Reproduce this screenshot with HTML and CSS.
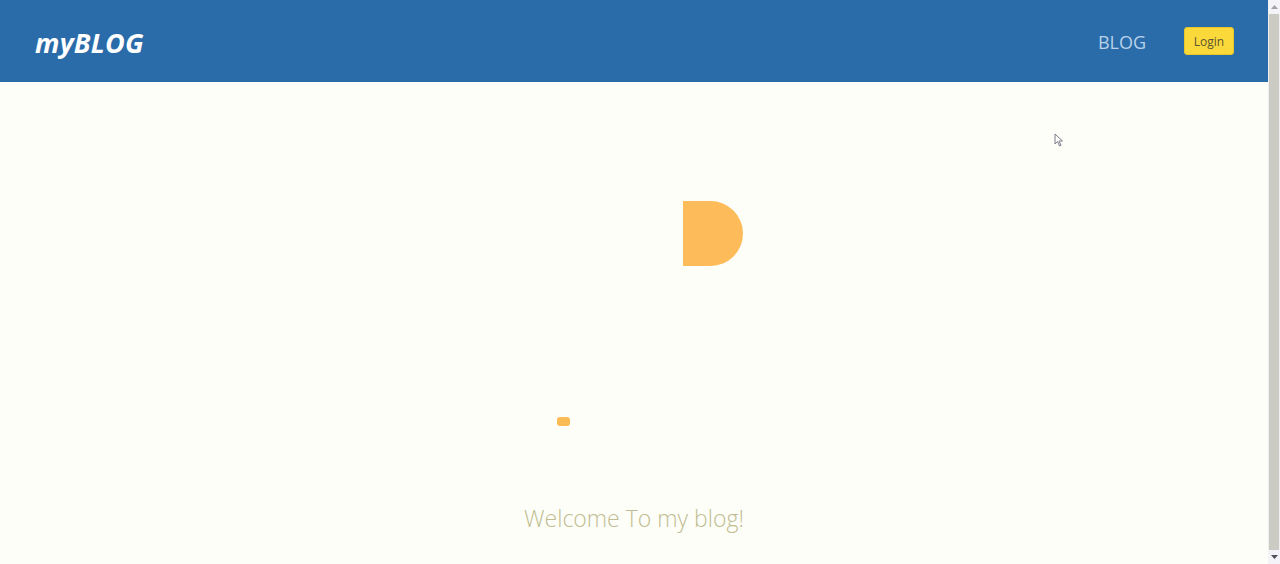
FILE: index.html
```html
<!DOCTYPE html>
<html lang="en">
<head>
<meta charset="utf-8">
<title>myBLOG</title>
<link rel="stylesheet" href="styles.css">
</head>
<body>
<div class="window">
  <div class="page">
    <header class="topbar">
      <a class="logo" href="#">myBLOG</a>
      <nav class="nav">
        <a class="nav-link" href="#">BLOG</a>
        <button class="login">Login</button>
      </nav>
    </header>
    <main class="hero">
      <div class="stage">
        <div class="shape-d"></div>
        <div class="shape-dot"></div>
        <svg class="cursor" width="10" height="14" viewBox="0 0 10 14"><path d="M1 1 L1 11 L3.5 8.5 L5.5 13 L7 12.3 L5 8 L8.5 8 Z" fill="#fff" stroke="#7a7a8a" stroke-width="1"/></svg>
      </div>
      <p class="welcome">Welcome To my blog!</p>
    </main>
  </div>
  <div class="scrollbar">
    <div class="sb-btn"><svg width="7" height="4" viewBox="0 0 7 4"><path d="M0 4 L3.5 0 L7 4 Z" fill="#a0a0a8"/></svg></div>
    <div class="sb-thumb"></div>
    <div class="sb-btn"><svg width="7" height="4" viewBox="0 0 7 4"><path d="M0 0 L3.5 4 L7 0 Z" fill="#505058"/></svg></div>
  </div>
</div>
</body>
</html>
```
FILE: styles.css
```css
* { box-sizing: border-box; }
html, body { margin: 0; padding: 0; height: 100%; overflow: hidden; }
body { background: #fefef8; font-family: "Open Sans", "Noto Sans", sans-serif; }
.window { display: flex; height: 564px; }
.page { flex: 1; display: flex; flex-direction: column; }
.topbar {
  height: 82px;
  background: #2a6ca9;
  display: flex;
  align-items: center;
  justify-content: space-between;
  padding: 0 34px 0 35px;
}
.logo {
  color: #fff;
  font-weight: 700;
  font-style: italic;
  font-size: 27px;
  text-decoration: none;
  letter-spacing: 0.2px;
  margin-top: 2px;
}
.nav { display: flex; align-items: center; gap: 38px; }
.nav-link {
  color: #b9d1ea;
  font-size: 18px;
  text-decoration: none;
  margin-top: 2px;
}
.login {
  background: #fbd93a;
  border: 1px solid #e8c62a;
  border-radius: 3px;
  color: #5c5430;
  font-family: "Open Sans", "Noto Sans", sans-serif;
  font-size: 12px;
  width: 50px;
  height: 28px;
  padding: 0;
}
.hero { flex: 1; display: flex; flex-direction: column; align-items: center; }
.stage { position: relative; width: 100%; height: 410px; }
.shape-d {
  position: absolute;
  left: 683px; top: 119px;
  width: 60px; height: 65px;
  background: #fdbb5a;
  border-radius: 0 33px 33px 0;
}
.shape-dot {
  position: absolute;
  left: 557px; top: 335px;
  width: 13px; height: 9px;
  background: #fbbb55;
  border-radius: 3px;
}
.cursor { position: absolute; left: 1054px; top: 51px; }
.welcome {
  margin: 10px 0 0;
  color: #c0bd92;
  font-size: 23px;
  font-weight: 300;
}
.scrollbar {
  width: 12px;
  background: #f0f0f0;
  display: flex;
  flex-direction: column;
}
.sb-btn { height: 14px; display: flex; align-items: center; justify-content: center; background: #f4f4f8; }
.sb-thumb { flex: 1; background: #cbcbc4; margin: 0 1px; }
```
